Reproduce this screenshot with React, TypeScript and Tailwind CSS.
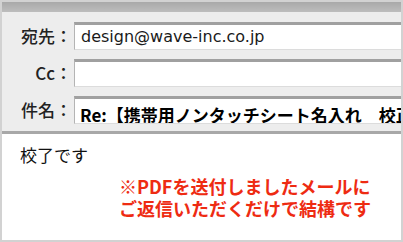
import React from 'react';

const jp = { fontFamily: '"Noto Sans CJK JP", sans-serif' };

function Row({ label, children }: { label: string; children?: React.ReactNode }) {
  return (
    <div className="flex items-stretch h-[28px]">
      <div className="w-[72px] shrink-0 flex items-center justify-end pr-[2px] text-[17px] text-[#222] font-medium">
        {label}
      </div>
      <div className="flex-1 flex items-center overflow-hidden whitespace-nowrap bg-white border-t-[3px] border-t-[#a0a0a0] border-l border-l-[#b4b4b4] border-b border-b-[#dcdcdc] pl-[5px]">
        {children}
      </div>
    </div>
  );
}

export default function App() {
  return (
    <div className="w-[403px] h-[242px] border-2 border-[#d2d2d2] bg-white flex flex-col overflow-hidden" style={jp}>
      <div className="bg-[#ededed] border-b-[3px] border-[#a8a8a8] pb-[7px]">
        <div className="h-[10px] bg-gradient-to-b from-[#a9a9a9] to-[#bdbdbd]" />
        <div className="flex flex-col gap-[9px] pt-[10px]">
          <Row label="宛先：">
            <span className="text-[16px] text-[#1a1a1a] ml-[1px]" style={{ fontFamily: '"DejaVu Sans", sans-serif' }}>
              design@wave-inc.co.jp
            </span>
          </Row>
          <Row label="Cc：" />
          <Row label="件名：">
            <span className="text-[17px] font-bold text-black leading-none translate-y-[3px]">
              Re:【携帯用ノンタッチシート名入れ　校正】
            </span>
          </Row>
        </div>
      </div>
      <div className="flex-1 pt-[9px] pl-[18px]">
        <p className="text-[17px] text-[#111] leading-[24px]">校了です</p>
        <p className="mt-[8px] ml-[99px] text-[18px] font-bold text-[#ee2b12] leading-[22px]">
          ※PDFを送付しましたメールに
          <br />
          ご返信いただくだけで結構です
        </p>
      </div>
    </div>
  );
}
